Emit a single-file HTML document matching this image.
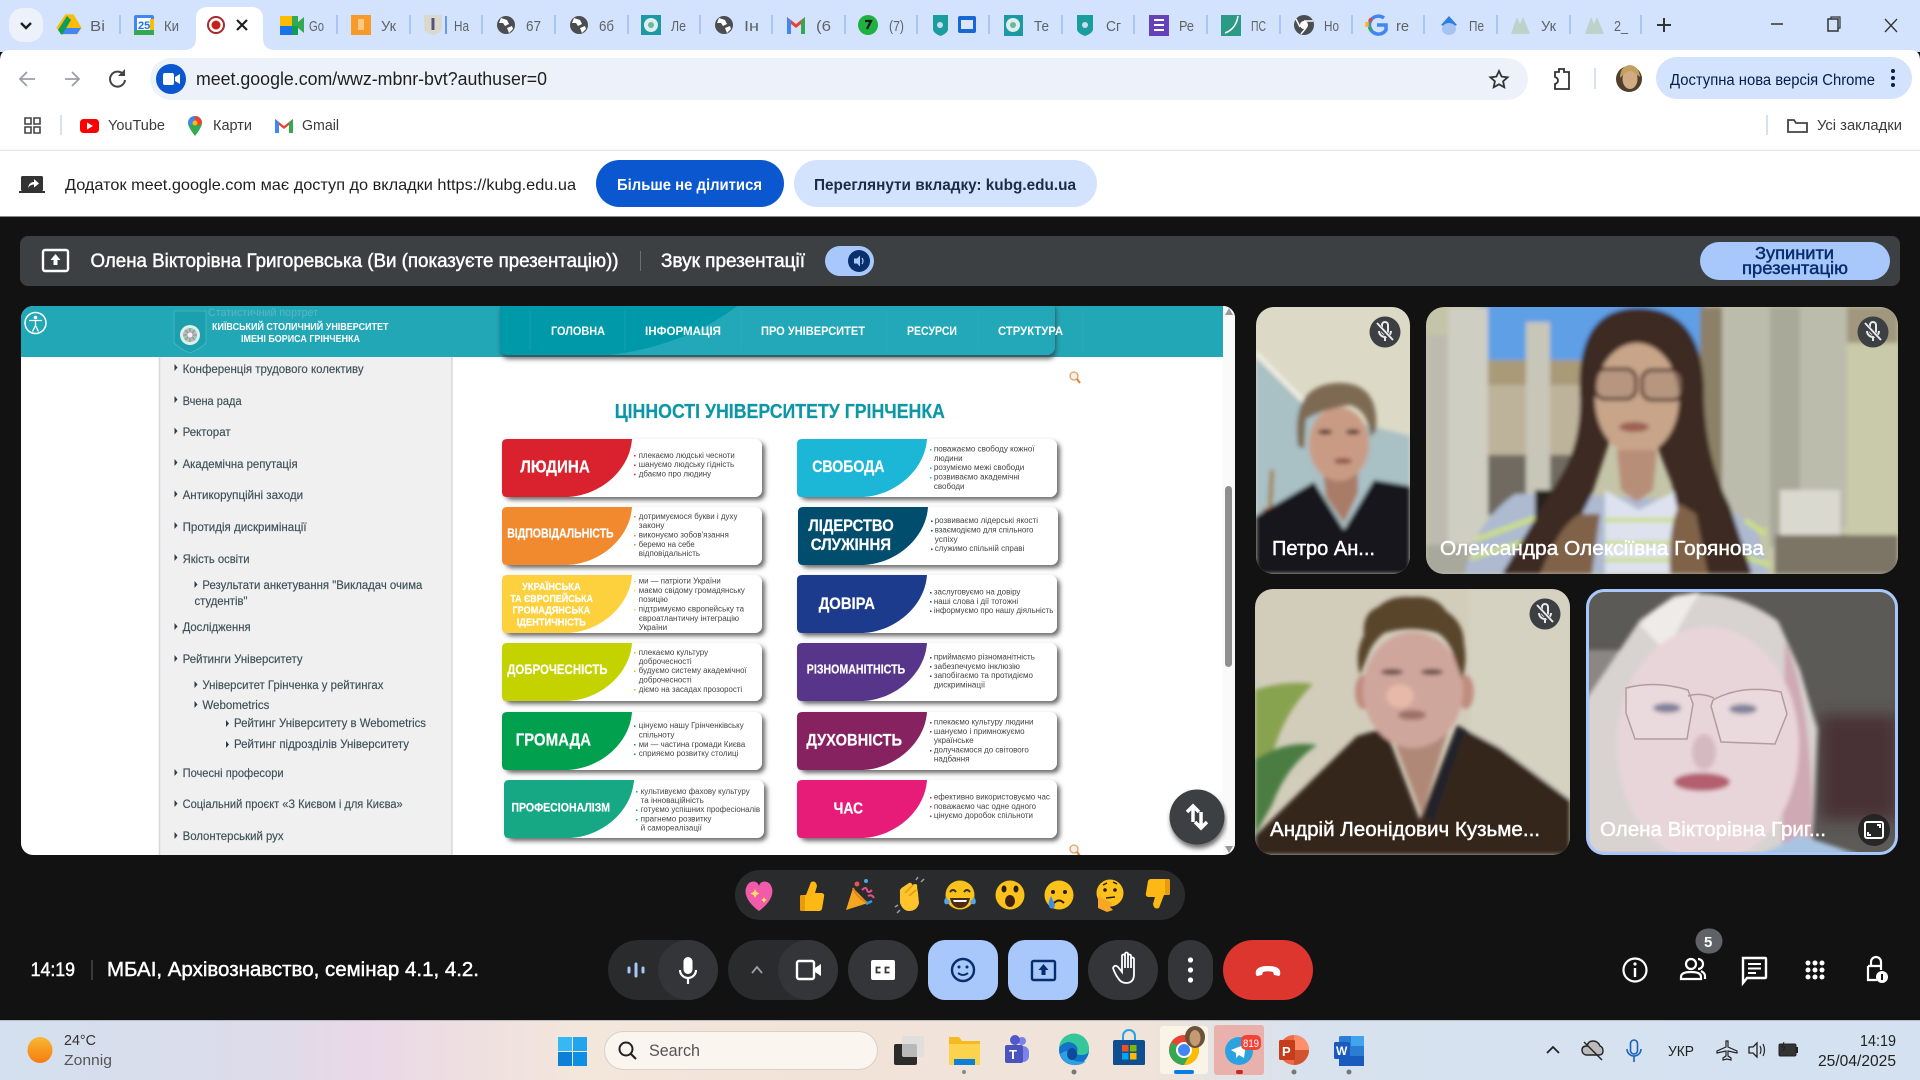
<!DOCTYPE html>
<html lang="uk"><head><meta charset="utf-8"><title>Meet</title>
<style>
html,body{margin:0;padding:0;background:#121212;width:1920px;height:1080px;overflow:hidden}
svg{display:block}
text{font-family:"Liberation Sans","Noto Sans CJK SC",sans-serif}
.m{stroke:currentColor;stroke-width:.45}
.tb text{font-size:15px;fill:#5f6368}
.s text{font-size:11.5px;fill:#3d5058;stroke:#3d5058;stroke-width:.15}
.c text{font-size:8px;fill:#444}
.l text{font-weight:bold;fill:#fff;stroke:#fff;stroke-width:.2}
.n text{font-size:20px;fill:#fff;stroke:#fff;stroke-width:.45}
</style></head><body>
<svg xmlns="http://www.w3.org/2000/svg" width="1920" height="1080" viewBox="0 0 1920 1080">
<defs>
<filter id="b3" x="-20%" y="-20%" width="140%" height="140%"><feGaussianBlur stdDeviation="2"/></filter>
<filter id="b6" x="-30%" y="-30%" width="160%" height="160%"><feGaussianBlur stdDeviation="7"/></filter>
<filter id="b1" x="-5%" y="-5%" width="110%" height="110%"><feGaussianBlur stdDeviation=".35"/></filter>
<filter id="sh" x="-5%" y="-5%" width="112%" height="115%"><feDropShadow dx="3" dy="3" stdDeviation="2.4" flood-color="#444" flood-opacity=".8"/></filter>
<filter id="sh2" x="-5%" y="-20%" width="110%" height="150%"><feDropShadow dx="1" dy="4" stdDeviation="2.5" flood-color="#333" flood-opacity=".7"/></filter>
<linearGradient id="tk" x1="0" x2="1" y1="0" y2="0"><stop offset="0" stop-color="#d3e0ef"/><stop offset=".13" stop-color="#dcdcea"/><stop offset=".19" stop-color="#e9d8e7"/><stop offset=".3" stop-color="#f3e6db"/><stop offset=".42" stop-color="#f2e3d8"/><stop offset=".6" stop-color="#efe3da"/><stop offset=".68" stop-color="#d8e2ef"/><stop offset="1" stop-color="#d3e1f1"/></linearGradient>
<linearGradient id="sun" x1="0" y1="0" x2="0" y2="1"><stop offset="0" stop-color="#f7b733"/><stop offset="1" stop-color="#f57c10"/></linearGradient>
<clipPath id="sl"><rect x="21" y="306" width="1214" height="549" rx="12"/></clipPath>
<clipPath id="t1"><rect x="1256" y="307" width="154" height="267" rx="18"/></clipPath>
<clipPath id="t2"><rect x="1426" y="307" width="472" height="267" rx="18"/></clipPath>
<clipPath id="t3"><rect x="1255" y="589" width="315" height="266" rx="18"/></clipPath>
<clipPath id="t4"><rect x="1586" y="589" width="312" height="266" rx="18"/></clipPath>
<path id="cv" d="M5 0H130C128 30 100 56 66 58H5Q0 58 0 53V5Q0 0 5 0Z"/>
<rect id="cd" width="260" height="58" rx="7" fill="#fff"/>
<g id="glb"><circle r="9" fill="#4a4d51"/><path d="M-5-7 1-5 3-1-1 1-3-2-7-2ZM1 3 6 1 7 4 3 8Z" fill="#fff"/></g>
<g id="mut"><circle r="15.5" fill="#3c4043"/><path d="M-3-7a3 3 0 0 1 6 0v6a3 3 0 0 1-6 0ZM-6-1a6 6 0 0 0 12 0M0 5v4" fill="none" stroke="#e8eaed" stroke-width="2"/><path d="M-8-8 8 9" stroke="#3c4043" stroke-width="4"/><path d="M-8-9 8 8" stroke="#e8eaed" stroke-width="2"/></g>
<path id="thb" d="M-9-1h5l5-13q5-2 6 4l-2 7h7q3 1 2 4l-2 12q-1 2-3 2H-9z"/>
</defs>

<rect width="1920" height="1080" fill="#121212"/>

<!-- tab strip -->
<rect width="1920" height="52" fill="#d3e3fd"/>
<rect x="9" y="8" width="34" height="34" rx="14" fill="#edf2fa"/>
<path d="M21 23l5 5 5-5" fill="none" stroke="#1f1f1f" stroke-width="2.4"/>
<path d="M120 15v19M337 15v19M410 15v19M482 15v19M555 15v19M628 15v19M700 15v19M772 15v19M845 15v19M917 15v19M989 15v19M1062 15v19M1134 15v19M1207 15v19M1280 15v19M1352 15v19M1424 15v19M1497 15v19M1570 15v19M1641 15v19" stroke="#a9c6f5" stroke-width="2"/>
<path d="M184 50q12 0 12-12V19q0-12 12-12h43q12 0 12 12v19q0 12 12 12z" fill="#fff"/>
<!-- tab favicons -->
<path d="M66 16l9 0 9 15-5 7H61l-5-7z" fill="#fbbc04" transform="translate(6 0) scale(.9)"/><path d="M63 28h18l-4 6H60z" fill="#4285f4"/><path d="M67 16l-9 14 4 5 9-15z" fill="#0f9d58"/>
<rect x="134" y="15" width="20" height="20" rx="2" fill="#4285f4"/><rect x="137" y="18" width="14" height="14" fill="#fff"/><rect x="134" y="30" width="20" height="5" fill="#34a853"/><rect x="150" y="19" width="4" height="11" fill="#fbbc04"/><text x="138" y="29" font-size="11" font-weight="bold" fill="#1a73e8">25</text>
<circle cx="216" cy="25" r="8" fill="none" stroke="#a52a2a" stroke-width="2"/><circle cx="216" cy="25" r="4.5" fill="#c5221f"/>
<path d="M237 20l10 10m0-10l-10 10" stroke="#1f1f1f" stroke-width="2.2"/>
<rect x="280" y="16" width="12" height="10" fill="#fbbc04"/><rect x="280" y="26" width="12" height="9" fill="#1a73e8"/><rect x="292" y="16" width="6" height="10" fill="#34a853"/><rect x="292" y="26" width="6" height="9" fill="#0f9d58"/><path d="M298 22l6-5v16l-6-5z" fill="#34a853"/>
<rect x="351" y="15" width="20" height="20" fill="#f79a28"/><rect x="358" y="19" width="6" height="11" fill="#f9c883"/>
<path d="M424 15h18v12q0 6-9 8-9-2-9-8z" fill="#d9d9cf"/><path d="M433 18v12" stroke="#557" stroke-width="3"/><path d="M446 16v18" stroke="#4b7fe0" stroke-width="1.5"/>
<use href="#glb" x="506" y="25"/><use href="#glb" x="579" y="25"/><use href="#glb" x="724" y="25"/>
<rect x="641" y="15" width="20" height="20" fill="#1b9aa5"/><circle cx="651" cy="25" r="7" fill="#dfeee8"/><circle cx="651" cy="25" r="3" fill="#66b7a8"/>
<path d="M787 34V17l9 7 9-7v17h-4V24l-5 4-5-4v10z" fill="#ea4335"/><path d="M787 17v17h4V21z" fill="#4285f4"/><path d="M801 21v13h4V17z" fill="#34a853"/>
<circle cx="868" cy="25" r="10" fill="#1fb141"/><path d="M865 21h6l-4 8" fill="none" stroke="#1a1a1a" stroke-width="2.2"/>
<path d="M933 15h15v14q0 4-7.500 7-7.500-3-7.500-7z" fill="#1a9d9d"/><circle cx="940" cy="25" r="3" fill="#cde"/>
<rect x="958" y="16" width="18" height="17" rx="2" fill="#1967d2"/><rect x="961" y="20" width="12" height="9" fill="#dbe6f6"/>
<rect x="1004" y="15" width="19" height="21" fill="#1b9aa5"/><circle cx="1013" cy="25" r="7" fill="#dfeee8"/><circle cx="1013" cy="25" r="3" fill="#66b7a8"/>
<path d="M1077 15h16v14q0 4-8 7-8-3-8-7z" fill="#1a9d9d"/><circle cx="1085" cy="25" r="3" fill="#cde"/>
<rect x="1149" y="15" width="20" height="21" fill="#6741b8"/><path d="M1154 20h10M1154 25h10M1154 30h10" stroke="#fff" stroke-width="2"/>
<rect x="1221" y="15" width="20" height="21" fill="#2b9b86"/><path d="M1225 33q11-4 13-17" fill="none" stroke="#fff" stroke-width="1.5"/>
<circle cx="1304" cy="25" r="10" fill="#4a4d51"/><circle cx="1304" cy="25" r="4" fill="#fff"/><path d="M1304 21h9M1300 27l-4-8M1306 28l-5 6" stroke="#fff" stroke-width="1.5"/>
<path d="M1384 18a9 9 0 1 0 2 12v-5h-9" fill="none" stroke="#4285f4" stroke-width="3.500"/><path d="M1369 19l3 2" stroke="#ea4335" stroke-width="3.500"/><path d="M1369 30l3-2" stroke="#34a853" stroke-width="3.500"/><path d="M1367 22v5" stroke="#fbbc04" stroke-width="3.500"/>
<path d="M1449 16l8 9-8 3-8-3z" fill="#2f7de1"/><ellipse cx="1449" cy="29" rx="7" ry="6" fill="#a6c4f2"/>
<path d="M1511 34l6-17 3 7 3-7 7 17h-19z" fill="#bcd2ca"/><path d="M1585 34l6-17 3 7 3-7 7 17h-19z" fill="#bcd2ca"/>
<g class="tb">
<text x="90" y="31" textLength="15" lengthAdjust="spacingAndGlyphs">Ві</text>
<text x="164" y="31" textLength="15" lengthAdjust="spacingAndGlyphs">Ки</text>
<text x="309" y="31" textLength="15" lengthAdjust="spacingAndGlyphs">Go</text>
<text x="381" y="31" textLength="15" lengthAdjust="spacingAndGlyphs">Ук</text>
<text x="454" y="31" textLength="15" lengthAdjust="spacingAndGlyphs">На</text>
<text x="526" y="31" textLength="15" lengthAdjust="spacingAndGlyphs">67</text>
<text x="599" y="31" textLength="15" lengthAdjust="spacingAndGlyphs">6б</text>
<text x="671" y="31" textLength="15" lengthAdjust="spacingAndGlyphs">Ле</text>
<text x="744" y="31" textLength="15" lengthAdjust="spacingAndGlyphs">Ін</text>
<text x="816" y="31" textLength="15" lengthAdjust="spacingAndGlyphs">(6</text>
<text x="889" y="31" textLength="15" lengthAdjust="spacingAndGlyphs">(7)</text>
<text x="1034" y="31" textLength="15" lengthAdjust="spacingAndGlyphs">Те</text>
<text x="1106" y="31" textLength="15" lengthAdjust="spacingAndGlyphs">Сг</text>
<text x="1179" y="31" textLength="15" lengthAdjust="spacingAndGlyphs">Ре</text>
<text x="1251" y="31" textLength="15" lengthAdjust="spacingAndGlyphs">ПС</text>
<text x="1324" y="31" textLength="15" lengthAdjust="spacingAndGlyphs">Но</text>
<text x="1396" y="31" textLength="13" lengthAdjust="spacingAndGlyphs">re</text>
<text x="1469" y="31" textLength="15" lengthAdjust="spacingAndGlyphs">Пе</text>
<text x="1541" y="31" textLength="15" lengthAdjust="spacingAndGlyphs">Ук</text>
<text x="1614" y="31" textLength="14" lengthAdjust="spacingAndGlyphs">2_</text>
</g>
<path d="M1664 18v14M1657 25h14" stroke="#333" stroke-width="2"/>
<path d="M1771 24h12" stroke="#333" stroke-width="1.500"/>
<rect x="1828" y="19" width="10" height="12" fill="none" stroke="#333" stroke-width="1.500"/><path d="M1831 19v-2h9v11h-2" fill="none" stroke="#333" stroke-width="1.200"/>
<path d="M1885 19l12 13m0-13l-12 13" stroke="#333" stroke-width="1.300"/>

<!-- toolbar -->
<path d="M0 150V60q0-10 10-10H1910q10 0 10 10v90z" fill="#fff"/>
<rect x="150" y="58" width="1378" height="42" rx="21" fill="#edf2fa"/>
<path d="M35 79H20M27 72l-7 7 7 7" fill="none" stroke="#9aa0a6" stroke-width="1.800"/>
<path d="M65 79h14M72 72l7 7-7 7" fill="none" stroke="#9aa0a6" stroke-width="1.800"/>
<path d="M123 74a7.500 7.500 0 1 0 2 6" fill="none" stroke="#444" stroke-width="2"/><path d="M125 69v7h-7" fill="#444"/>
<circle cx="171" cy="79" r="15" fill="#0b57d0"/><rect x="163" y="73" width="11" height="12" rx="2" fill="#fff"/><path d="M175 77l5-3v10l-5-3z" fill="#fff"/>
<text x="196" y="85" font-size="18" fill="#1f1f1f" textLength="351" lengthAdjust="spacingAndGlyphs">meet.google.com/wwz-mbnr-bvt?authuser=0</text>
<path d="M1499 71l2.600 5.600 6 .7-4.500 4 1.200 6-5.300-3-5.300 3 1.200-6-4.500-4 6-.7z" fill="none" stroke="#333" stroke-width="1.800"/>
<path d="M1555 72h4v-3h5v3h5v17h-14v-5q3-1 3-3.500t-3-3.500z" fill="none" stroke="#333" stroke-width="1.800"/>
<path d="M1595 68v21" stroke="#c7d8f0" stroke-width="1.500"/>
<ellipse cx="1629" cy="79" rx="13" ry="13" fill="#4f3f2c"/><ellipse cx="1630" cy="79" rx="7.500" ry="10" fill="#d0ab84"/><path d="M1620 78q0-12 10-13 9 1 10 12l-3-2q-7-8-14 0z" fill="#c4a060"/>
<rect x="1656" y="57" width="256" height="42" rx="21" fill="#d3e3fd"/>
<text x="1670" y="85" font-size="15.500" fill="#041e49" textLength="205" lengthAdjust="spacingAndGlyphs">Доступна нова версія Chrome</text>
<circle cx="1893" cy="71" r="2" fill="#041e49"/><circle cx="1893" cy="78" r="2" fill="#041e49"/><circle cx="1893" cy="85" r="2" fill="#041e49"/>

<!-- bookmarks -->
<path d="M25 118h6v6h-6zM34 118h6v6h-6zM25 127h6v6h-6zM34 127h6v6h-6z" fill="none" stroke="#444" stroke-width="1.600"/>
<path d="M61 115v20" stroke="#c7d8f0" stroke-width="1.500"/>
<rect x="80" y="119" width="19" height="14" rx="3.500" fill="#f00"/><path d="M87 122.500l6 3.500-6 3.500z" fill="#fff"/>
<text x="108" y="130" font-size="15" fill="#3c3c3c" textLength="57" lengthAdjust="spacingAndGlyphs">YouTube</text>
<path d="M195 136q-7-9-7-13a7 7 0 0 1 14 0q0 4-7 13z" fill="#34a853"/><path d="M188 123a7 7 0 0 1 7-7l3 3-7 7z" fill="#4285f4"/><path d="M195 116a7 7 0 0 1 7 7l-4 3-3-6z" fill="#ea4335"/><circle cx="195" cy="123" r="2.500" fill="#fbbc04"/>
<text x="213" y="130" font-size="15" fill="#3c3c3c" textLength="39" lengthAdjust="spacingAndGlyphs">Карти</text>
<path d="M275 133v-14l9 7 9-7v14h-4v-8l-5 4-5-4v8z" fill="#ea4335"/><path d="M275 119v14h4v-11z" fill="#4285f4"/><path d="M289 122v11h4v-14z" fill="#34a853"/>
<text x="302" y="130" font-size="15" fill="#3c3c3c" textLength="37" lengthAdjust="spacingAndGlyphs">Gmail</text>
<path d="M1767 115v20" stroke="#c7d8f0" stroke-width="1.500"/>
<path d="M1788 120h6l2 3h11v9h-19z" fill="none" stroke="#444" stroke-width="1.800"/>
<text x="1817" y="130" font-size="15" fill="#3c3c3c" textLength="85" lengthAdjust="spacingAndGlyphs">Усі закладки</text>
<path d="M0 150.500H1920" stroke="#e1e3e6" stroke-width="1.500"/>

<!-- infobar -->
<rect y="151" width="1920" height="65.500" fill="#fff"/>
<rect x="21" y="176" width="22" height="15" rx="1.500" fill="#333"/><path d="M19 191h26v2H19z" fill="#333"/><path d="M28 188q1-6 6-6v-3l5 4.500-5 4v-3q-4 0-6 3.500z" fill="#fff"/>
<text x="65" y="190" font-size="16" fill="#1f1f1f" textLength="511" lengthAdjust="spacingAndGlyphs">Додаток meet.google.com має доступ до вкладки https://kubg.edu.ua</text>
<rect x="596" y="160" width="188" height="47" rx="23.500" fill="#0b57d0"/>
<text x="617" y="190" font-size="16" font-weight="bold" fill="#fff" textLength="145" lengthAdjust="spacingAndGlyphs">Більше не ділитися</text>
<rect x="794" y="160" width="303" height="47" rx="23.500" fill="#d3e3fd"/>
<text x="814" y="190" font-size="16" font-weight="bold" fill="#1f2a44" textLength="262" lengthAdjust="spacingAndGlyphs">Переглянути вкладку: kubg.edu.ua</text>

<!-- share bar -->
<rect x="20" y="236" width="1880" height="50" rx="8" fill="#3c4043"/>
<rect x="43" y="250" width="25" height="21" rx="2" fill="none" stroke="#fff" stroke-width="2.400"/><path d="M55.500 254l5 6h-3v5h-4v-5h-3z" fill="#fff"/>
<text x="90.500" y="267" font-size="19" fill="#fff" class="m" color="#fff" textLength="528" lengthAdjust="spacingAndGlyphs">Олена Вікторівна Григоревська (Ви (показуєте презентацію))</text>
<path d="M640.500 251v20" stroke="#6b6e72" stroke-width="1"/>
<text x="661" y="267" font-size="19" fill="#fff" class="m" color="#fff" textLength="144" lengthAdjust="spacingAndGlyphs">Звук презентації</text>
<rect x="825" y="246" width="49" height="30" rx="15" fill="#a8c7fa"/><circle cx="859" cy="261" r="11" fill="#0a2f6d"/>
<path d="M854 258.500h3l3-3v11l-3-3h-3z" fill="#a8c7fa"/><path d="M862 258q2 3 0 6" fill="none" stroke="#a8c7fa" stroke-width="1.200"/>
<rect x="1700" y="242" width="190" height="38" rx="19" fill="#a8c7fa"/>
<text x="1755" y="259" font-size="17.500" fill="#062e6f" class="m" color="#062e6f" textLength="79" lengthAdjust="spacingAndGlyphs">Зупинити</text>
<text x="1742" y="274" font-size="17.500" fill="#062e6f" class="m" color="#062e6f" textLength="106" lengthAdjust="spacingAndGlyphs">презентацію</text>

<!-- slide -->
<g clip-path="url(#sl)">
<rect x="21" y="306" width="1214" height="549" fill="#fff"/>
<g filter="url(#b1)">
<rect x="159" y="306" width="293" height="549" fill="#f0f0f0"/>
<path d="M159.500 306v549M452 306v549" stroke="#d8d8d8" stroke-width="1.500"/>
<g class="s">
<path d="M174.500 364l3 3.500-3 3.500zM174.500 396l3 3.500-3 3.500zM174.500 427.500l3 3.500-3 3.500zM174.500 459l3 3.500-3 3.500zM174.500 490.500l3 3.500-3 3.500zM174.500 522l3 3.500-3 3.500zM174.500 554l3 3.500-3 3.500zM194.500 581l3 3.500-3 3.500zM174.500 623l3 3.500-3 3.500zM174.500 655l3 3.500-3 3.500zM194.500 681l3 3.500-3 3.500zM194.500 701l3 3.500-3 3.500zM226 720l3 3.500-3 3.500zM226 741l3 3.500-3 3.500zM174.500 769l3 3.500-3 3.500zM174.500 800l3 3.500-3 3.500zM174.500 832l3 3.500-3 3.500z" fill="#2d3c44"/>
<text x="182.600" y="373" textLength="181" lengthAdjust="spacingAndGlyphs">Конференція трудового колективу</text>
<text x="182.600" y="405" textLength="59" lengthAdjust="spacingAndGlyphs">Вчена рада</text>
<text x="182.600" y="436" textLength="48" lengthAdjust="spacingAndGlyphs">Ректорат</text>
<text x="182.600" y="468" textLength="115" lengthAdjust="spacingAndGlyphs">Академічна репутація</text>
<text x="182.600" y="499" textLength="120.500" lengthAdjust="spacingAndGlyphs">Антикорупційні заходи</text>
<text x="182.600" y="531" textLength="124" lengthAdjust="spacingAndGlyphs">Протидія дискримінації</text>
<text x="182.600" y="563" textLength="67" lengthAdjust="spacingAndGlyphs">Якість освіти</text>
<text x="202.400" y="589" textLength="220" lengthAdjust="spacingAndGlyphs">Результати анкетування "Викладач очима</text>
<text x="194.500" y="605" textLength="53" lengthAdjust="spacingAndGlyphs">студентів"</text>
<text x="182.600" y="631" textLength="68" lengthAdjust="spacingAndGlyphs">Дослідження</text>
<text x="182.600" y="663" textLength="120" lengthAdjust="spacingAndGlyphs">Рейтинги Університету</text>
<text x="202.400" y="689" textLength="181" lengthAdjust="spacingAndGlyphs">Університет Грінченка у рейтингах</text>
<text x="202.400" y="709" textLength="67" lengthAdjust="spacingAndGlyphs">Webometrics</text>
<text x="234" y="727" textLength="192" lengthAdjust="spacingAndGlyphs">Рейтинг Університету в Webometrics</text>
<text x="234" y="748" textLength="175" lengthAdjust="spacingAndGlyphs">Рейтинг підрозділів Університету</text>
<text x="182.600" y="777" textLength="101" lengthAdjust="spacingAndGlyphs">Почесні професори</text>
<text x="182.600" y="808" textLength="220" lengthAdjust="spacingAndGlyphs">Соціальний проєкт «З Києвом і для Києва»</text>
<text x="182.600" y="840" textLength="101" lengthAdjust="spacingAndGlyphs">Волонтерський рух</text>
</g>
<!-- header -->
<rect x="21" y="306" width="1202" height="51" fill="#23a7b7"/>
<rect x="500" y="300" width="555" height="55" rx="8" fill="#24a8b8" filter="url(#sh2)"/>
<path d="M500 300H745Q690 345 610 355H508Q500 355 500 347z" fill="#0099a9"/>
<path d="M530 310v40M625 310v40M741 310v40M887 310v40M978 310v40M1083 310v40" stroke="#46b5c4" stroke-width=".5" stroke-opacity=".6"/>
<path d="M174 311h32v32q-6 6-16 10-10-4-16-10z" fill="#1ba0ae" stroke="#5cbcc8" stroke-width=".6"/>
<circle cx="190" cy="335" r="10" fill="#dff0ea"/><circle cx="190" cy="335" r="7" fill="#8fd0b8"/><path d="M190 328v14M183 335h14M185 330l10 10M195 330l-10 10" stroke="#d86a9a" stroke-width="1"/><circle cx="190" cy="335" r="2.500" fill="#f5f5f5"/>
<text x="208" y="316" font-size="11" fill="#5bb5c2" textLength="110" lengthAdjust="spacingAndGlyphs">Статистичний портрет</text>
<text x="212" y="330" font-size="10" font-weight="bold" fill="#fff" textLength="176.500" lengthAdjust="spacingAndGlyphs">КИЇВСЬКИЙ СТОЛИЧНИЙ УНІВЕРСИТЕТ</text>
<text x="241" y="342" font-size="10" font-weight="bold" fill="#fff" textLength="119" lengthAdjust="spacingAndGlyphs">ІМЕНІ БОРИСА ГРІНЧЕНКА</text>
<g font-weight="bold" font-size="12" fill="#fff">
<text x="551" y="335" textLength="54" lengthAdjust="spacingAndGlyphs">ГОЛОВНА</text>
<text x="645" y="335" textLength="76" lengthAdjust="spacingAndGlyphs">ІНФОРМАЦІЯ</text>
<text x="761" y="335" textLength="104" lengthAdjust="spacingAndGlyphs">ПРО УНІВЕРСИТЕТ</text>
<text x="907" y="335" textLength="50" lengthAdjust="spacingAndGlyphs">РЕСУРСИ</text>
<text x="998" y="335" textLength="65" lengthAdjust="spacingAndGlyphs">СТРУКТУРА</text>
</g>
<circle cx="35.500" cy="323" r="10.500" fill="none" stroke="#fff" stroke-width="1.500"/><circle cx="35.500" cy="317.500" r="1.800" fill="#fff"/><path d="M29 320.500h13M35.500 320v6M35.500 325.500l-3 6M35.500 325.500l3 6" stroke="#fff" stroke-width="1.300" fill="none"/>
<!-- magnifiers -->
<circle cx="1074" cy="376" r="4" fill="#f7efe4" stroke="#dca66c" stroke-width="1.300"/><path d="M1077 379l3 4" stroke="#d98a3d" stroke-width="2.200"/>
<circle cx="1074" cy="849" r="4" fill="#f7efe4" stroke="#dca66c" stroke-width="1.300"/><path d="M1077 852l3 4" stroke="#d98a3d" stroke-width="2.200"/>
<!-- title -->
<text x="614.700" y="418" font-size="20" font-weight="bold" fill="#0e97a6" stroke="#0e97a6" stroke-width=".2" textLength="330.300" lengthAdjust="spacingAndGlyphs">ЦІННОСТІ УНІВЕРСИТЕТУ ГРІНЧЕНКА</text>
<!-- cards -->
<g filter="url(#sh)">
<use href="#cd" x="502" y="439"/><use href="#cd" x="502" y="507"/><use href="#cd" x="502" y="575"/><use href="#cd" x="502" y="643"/><use href="#cd" x="502" y="712"/><use href="#cd" x="504" y="780"/>
<use href="#cd" x="797" y="439"/><use href="#cd" x="798" y="507"/><use href="#cd" x="797" y="575"/><use href="#cd" x="797" y="643"/><use href="#cd" x="797" y="712"/><use href="#cd" x="797" y="780"/>
</g>
<use href="#cv" x="502" y="439" fill="#d9232e"/><use href="#cv" x="502" y="507" fill="#f18a2f"/><use href="#cv" x="502" y="575" fill="#fdd03e"/><use href="#cv" x="502" y="643" fill="#c4d200"/><use href="#cv" x="502" y="712" fill="#03a04f"/><use href="#cv" x="504" y="780" fill="#12a785"/>
<use href="#cv" x="797" y="439" fill="#1fb7d7"/><use href="#cv" x="798" y="507" fill="#034d6e"/><use href="#cv" x="797" y="575" fill="#1f3a8c"/><use href="#cv" x="797" y="643" fill="#57348a"/><use href="#cv" x="797" y="712" fill="#85205f"/><use href="#cv" x="797" y="780" fill="#e61d78"/>
<g class="l">
<text x="520.200" y="472.300" font-size="17.500" textLength="69.700" lengthAdjust="spacingAndGlyphs">ЛЮДИНА</text>
<text x="507.200" y="537.700" font-size="13" textLength="106.400" lengthAdjust="spacingAndGlyphs">ВІДПОВІДАЛЬНІСТЬ</text>
<text x="522.100" y="590" font-size="10.500" textLength="58.600" lengthAdjust="spacingAndGlyphs">УКРАЇНСЬКА</text>
<text x="510.200" y="602" font-size="10.500" textLength="82.700" lengthAdjust="spacingAndGlyphs">ТА ЄВРОПЕЙСЬКА</text>
<text x="512.500" y="613.700" font-size="10.500" textLength="77.700" lengthAdjust="spacingAndGlyphs">ГРОМАДЯНСЬКА</text>
<text x="516.700" y="625.700" font-size="10.500" textLength="69.300" lengthAdjust="spacingAndGlyphs">ІДЕНТИЧНІСТЬ</text>
<text x="507.200" y="674" font-size="14" textLength="100.300" lengthAdjust="spacingAndGlyphs">ДОБРОЧЕСНІСТЬ</text>
<text x="515.600" y="745.300" font-size="17.500" textLength="75.400" lengthAdjust="spacingAndGlyphs">ГРОМАДА</text>
<text x="511.400" y="811.700" font-size="12" textLength="98.700" lengthAdjust="spacingAndGlyphs">ПРОФЕСІОНАЛІЗМ</text>
<text x="812.200" y="472" font-size="17" textLength="72.300" lengthAdjust="spacingAndGlyphs">СВОБОДА</text>
<text x="808.400" y="531" font-size="16.500" textLength="85.300" lengthAdjust="spacingAndGlyphs">ЛІДЕРСТВО</text>
<text x="810.700" y="550" font-size="16.500" textLength="80.400" lengthAdjust="spacingAndGlyphs">СЛУЖІННЯ</text>
<text x="818.700" y="609" font-size="17" textLength="56.300" lengthAdjust="spacingAndGlyphs">ДОВІРА</text>
<text x="806.800" y="673.700" font-size="12.500" textLength="98.400" lengthAdjust="spacingAndGlyphs">РІЗНОМАНІТНІСТЬ</text>
<text x="806.400" y="745.300" font-size="17" textLength="95.700" lengthAdjust="spacingAndGlyphs">ДУХОВНІСТЬ</text>
<text x="833.600" y="813.300" font-size="16" textLength="29.500" lengthAdjust="spacingAndGlyphs">ЧАС</text>
</g>
<g class="c">
<text x="638.800" y="457.800" textLength="96" lengthAdjust="spacingAndGlyphs">плекаємо людські чесноти</text>
<text x="638.800" y="467.200" textLength="95.300" lengthAdjust="spacingAndGlyphs">шануємо людську гідність</text>
<text x="638.800" y="476.500" textLength="72.300" lengthAdjust="spacingAndGlyphs">дбаємо про людину</text>
<text x="638.800" y="518.800" textLength="98.700" lengthAdjust="spacingAndGlyphs">дотримуємося букви і духу</text>
<text x="638.800" y="528.200" textLength="25.600" lengthAdjust="spacingAndGlyphs">закону</text>
<text x="638.800" y="537.500" textLength="90" lengthAdjust="spacingAndGlyphs">виконуємо зобов'язання</text>
<text x="638.800" y="546.800" textLength="55.900" lengthAdjust="spacingAndGlyphs">беремо на себе</text>
<text x="638.800" y="556.200" textLength="61.200" lengthAdjust="spacingAndGlyphs">відповідальність</text>
<text x="638.800" y="583.500" textLength="81.900" lengthAdjust="spacingAndGlyphs">ми — патріоти України</text>
<text x="638.800" y="592.800" textLength="106" lengthAdjust="spacingAndGlyphs">маємо свідому громадянську</text>
<text x="638.800" y="602.200" textLength="29" lengthAdjust="spacingAndGlyphs">позицію</text>
<text x="638.800" y="611.500" textLength="105.200" lengthAdjust="spacingAndGlyphs">підтримуємо європейську та</text>
<text x="638.800" y="620.800" textLength="100.300" lengthAdjust="spacingAndGlyphs">євроатлантичну інтеграцію</text>
<text x="638.800" y="629.800" textLength="28.300" lengthAdjust="spacingAndGlyphs">України</text>
<text x="638.800" y="654.800" textLength="69.300" lengthAdjust="spacingAndGlyphs">плекаємо культуру</text>
<text x="638.800" y="663.800" textLength="52.800" lengthAdjust="spacingAndGlyphs">доброчесності</text>
<text x="638.800" y="673.200" textLength="107.900" lengthAdjust="spacingAndGlyphs">будуємо систему академічної</text>
<text x="638.800" y="682.500" textLength="52.800" lengthAdjust="spacingAndGlyphs">доброчесності</text>
<text x="638.800" y="691.800" textLength="103.300" lengthAdjust="spacingAndGlyphs">діємо на засадах прозорості</text>
<text x="638.800" y="728.200" textLength="104.900" lengthAdjust="spacingAndGlyphs">цінуємо нашу Грінченківську</text>
<text x="638.800" y="737.500" textLength="35.600" lengthAdjust="spacingAndGlyphs">спільноту</text>
<text x="638.800" y="746.800" textLength="106.400" lengthAdjust="spacingAndGlyphs">ми — частина громади Києва</text>
<text x="638.800" y="756.200" textLength="99.500" lengthAdjust="spacingAndGlyphs">сприяємо розвитку столиці</text>
<text x="640.700" y="793.800" textLength="109" lengthAdjust="spacingAndGlyphs">культивуємо фахову культуру</text>
<text x="640.700" y="802.800" textLength="63.100" lengthAdjust="spacingAndGlyphs">та інноваційність</text>
<text x="640.700" y="812.200" textLength="119.400" lengthAdjust="spacingAndGlyphs">готуємо успішних професіоналів</text>
<text x="640.700" y="821.500" textLength="70.800" lengthAdjust="spacingAndGlyphs">прагнемо розвитку</text>
<text x="640.700" y="830.500" textLength="61.200" lengthAdjust="spacingAndGlyphs">й самореалізації</text>
<text x="933.900" y="451.500" textLength="100.700" lengthAdjust="spacingAndGlyphs">поважаємо свободу кожної</text>
<text x="933.900" y="460.800" textLength="28.700" lengthAdjust="spacingAndGlyphs">людини</text>
<text x="933.900" y="470.200" textLength="90.300" lengthAdjust="spacingAndGlyphs">розуміємо межі свободи</text>
<text x="933.900" y="479.500" textLength="85.700" lengthAdjust="spacingAndGlyphs">розвиваємо академічні</text>
<text x="933.900" y="488.800" textLength="30.600" lengthAdjust="spacingAndGlyphs">свободи</text>
<text x="934.700" y="523.200" textLength="103.300" lengthAdjust="spacingAndGlyphs">розвиваємо лідерські якості</text>
<text x="934.700" y="532.500" textLength="98.700" lengthAdjust="spacingAndGlyphs">взаємодіємо для спільного</text>
<text x="934.700" y="541.800" textLength="23" lengthAdjust="spacingAndGlyphs">успіху</text>
<text x="934.700" y="551.200" textLength="89.600" lengthAdjust="spacingAndGlyphs">служимо спільній справі</text>
<text x="933.900" y="594.500" textLength="86.500" lengthAdjust="spacingAndGlyphs">заслуговуємо на довіру</text>
<text x="933.900" y="603.800" textLength="84.200" lengthAdjust="spacingAndGlyphs">наші слова і дії тотожні</text>
<text x="933.900" y="613.200" textLength="119.400" lengthAdjust="spacingAndGlyphs">інформуємо про нашу діяльність</text>
<text x="933.900" y="659.500" textLength="101" lengthAdjust="spacingAndGlyphs">приймаємо різноманітність</text>
<text x="933.900" y="668.800" textLength="86.100" lengthAdjust="spacingAndGlyphs">забезпечуємо інклюзію</text>
<text x="933.900" y="678.200" textLength="99.100" lengthAdjust="spacingAndGlyphs">запобігаємо та протидіємо</text>
<text x="933.900" y="687.500" textLength="51.300" lengthAdjust="spacingAndGlyphs">дискримінації</text>
<text x="933.900" y="724.500" textLength="99.500" lengthAdjust="spacingAndGlyphs">плекаємо культуру людини</text>
<text x="933.900" y="733.800" textLength="90.700" lengthAdjust="spacingAndGlyphs">шануємо і примножуємо</text>
<text x="933.900" y="743.200" textLength="39.800" lengthAdjust="spacingAndGlyphs">українське</text>
<text x="933.900" y="752.500" textLength="94.900" lengthAdjust="spacingAndGlyphs">долучаємося до світового</text>
<text x="933.900" y="761.500" textLength="35.600" lengthAdjust="spacingAndGlyphs">надбання</text>
<text x="933.900" y="799.500" textLength="116" lengthAdjust="spacingAndGlyphs">ефективно використовуємо час</text>
<text x="933.900" y="808.800" textLength="102.200" lengthAdjust="spacingAndGlyphs">поважаємо час одне одного</text>
<text x="933.900" y="818.200" textLength="99.100" lengthAdjust="spacingAndGlyphs">цінуємо доробок спільноти</text>
</g>
<!-- bullets -->
<path d="M634 455h1.500v1.500H634zM634 464.500h1.500v1.500H634zM634 473.800h1.500v1.500H634z" fill="#d9232e"/>
<path d="M634 516h1.500v1.500H634zM634 535h1.500v1.500H634zM634 544h1.500v1.500H634z" fill="#f18a2f"/>
<path d="M634 581h1.500v1.500H634zM634 590h1.500v1.500H634zM634 609h1.500v1.500H634z" fill="#fdd03e"/>
<path d="M634 652h1.500v1.500H634zM634 670.500h1.500v1.500H634zM634 689h1.500v1.500H634z" fill="#c4d200"/>
<path d="M634 725.500h1.500v1.500H634zM634 744h1.500v1.500H634zM634 753.500h1.500v1.500H634z" fill="#03a04f"/>
<path d="M636 791h1.500v1.500H636zM636 809.500h1.500v1.500H636zM636 819h1.500v1.500H636z" fill="#12a785"/>
<path d="M930 449h1.500v1.500H930zM930 467.500h1.500v1.500H930zM930 477h1.500v1.500H930z" fill="#1fb7d7"/>
<path d="M931 520.500h1.500v1.500H931zM931 530h1.500v1.500H931zM931 548.500h1.500v1.500H931z" fill="#034d6e"/>
<path d="M930 592h1.500v1.500H930zM930 601h1.500v1.500H930zM930 610.500h1.500v1.500H930z" fill="#1f3a8c"/>
<path d="M930 657h1.500v1.500H930zM930 666h1.500v1.500H930zM930 675.500h1.500v1.500H930z" fill="#57348a"/>
<path d="M930 722h1.500v1.500H930zM930 731h1.500v1.500H930zM930 750h1.500v1.500H930z" fill="#85205f"/>
<path d="M930 797h1.500v1.500H930zM930 806h1.500v1.500H930zM930 815.500h1.500v1.500H930z" fill="#e61d78"/>
</g>
<!-- scrollbar -->
<rect x="1223" y="306" width="12" height="549" fill="#fafafa"/>
<path d="M1229 308l4 7h-8z" fill="#999"/><path d="M1229 853l4-7h-8z" fill="#999"/>
<rect x="1225" y="486" width="7" height="181" rx="3.500" fill="#8f8f8f"/>
<circle cx="1197" cy="817" r="27.500" fill="#3c4043" filter="url(#sh2)"/>
<path d="M1193 822v-15M1187 812l6-6 6 6M1201 812v16M1195 822l6 6 6-6" fill="none" stroke="#fff" stroke-width="3.500"/>
</g>

<!-- tile 1 -->
<g clip-path="url(#t1)">
<rect x="1256" y="307" width="154" height="267" fill="#dcdac6"/>
<g filter="url(#b3)">
<path d="M1256 358L1309 410 1410 436V574H1256Z" fill="#a9c0c4"/>
<path d="M1256 353L1309 407" stroke="#f0efe6" stroke-width="4"/>
<path d="M1272 470l-3 60" stroke="#a67c3c" stroke-width="4"/><ellipse cx="1267" cy="530" rx="9" ry="22" fill="#b23c36"/>
<path d="M1322 465h36l0 28-14 30-18-26z" fill="#a97c68"/>
<path d="M1256 516L1314 482 1344 530 1374 480 1410 486V574H1256Z" fill="#15161b"/>
<ellipse cx="1339" cy="444" rx="30" ry="37" fill="#c99b84"/>
<path d="M1298 446q-8-60 38-63 44-2 40 48l-6 6q-1-26-20-32-26 4-44 14l-2 30z" fill="#7e6a52"/>
<ellipse cx="1325" cy="432" rx="7" ry="2.500" fill="#4e352b"/><ellipse cx="1353" cy="432" rx="7" ry="2.500" fill="#4e352b"/>
<ellipse cx="1343" cy="461" rx="9" ry="3" fill="#8f544e"/>
</g>
</g>
<use href="#mut" x="1385" y="332"/>
<g class="n"><text x="1272" y="555" textLength="103" lengthAdjust="spacingAndGlyphs">Петро Ан...</text></g>

<!-- tile 2 -->
<g clip-path="url(#t2)">
<rect x="1426" y="307" width="472" height="267" fill="#c4c4a8"/>
<g filter="url(#b3)">
<rect x="1480" y="300" width="225" height="62" fill="#5f9fe6"/>
<rect x="1480" y="360" width="110" height="25" fill="#a99a78"/>
<rect x="1480" y="385" width="110" height="70" fill="#bdb39b"/>
<rect x="1480" y="455" width="100" height="60" fill="#6f6b60"/>
<rect x="1426" y="335" width="22" height="240" fill="#bdbbaf"/>
<rect x="1448" y="307" width="40" height="240" fill="#cfcec2"/>
<rect x="1526" y="322" width="24" height="210" fill="#c7c6b8"/>
<rect x="1700" y="307" width="22" height="230" fill="#8c8068"/>
<rect x="1722" y="307" width="125" height="220" fill="#bcbcad"/>
<rect x="1770" y="307" width="30" height="240" fill="#a9a99a"/>
<rect x="1780" y="490" width="60" height="45" fill="#dad9d0"/>
<rect x="1847" y="340" width="51" height="200" fill="#c9caa9"/>
<rect x="1847" y="307" width="51" height="36" fill="#a0977e"/>
<rect x="1775" y="535" width="123" height="39" fill="#7c7466"/>
<rect x="1426" y="545" width="50" height="29" fill="#a8a89c"/>
<path d="M1465 574q8-50 50-80l60 0 130 8 50 20 14 52z" fill="#aebad0"/>
<path d="M1475 540l60-22M1470 558l60-18M1745 520l20 14M1740 555l30 10M1605 522l90 0M1605 545h90" stroke="#cde07a" stroke-width="5"/>
<path d="M1535 490l20 0 0 48-20 10z" fill="#28231f"/>
<path d="M1605 490l34 20 38-20v84h-72z" fill="#dde2ee"/>
<path d="M1605 520h72M1605 543h72M1605 560h72" stroke="#cddd7a" stroke-width="4"/>
<path d="M1580 400q-6-92 58-92 68 0 66 92 2 60 26 106l22 68h-60l-20-90-20-50h-40l-20 60-40 80h-50l60-100q18-30 18-74z" fill="#3d2c22"/>
<path d="M1540 574q20-50 40-60l20 0-8 60zM1670 574q-2-50 10-70l16 10 12 60z" fill="#80624a"/>
<ellipse cx="1637" cy="399" rx="42" ry="56" fill="#c8a589"/>
<path d="M1617 450h40l-4 40-16 12-16-12z" fill="#b78f78"/>
<rect x="1595" y="369" width="41" height="30" rx="10" fill="#a98a78" fill-opacity=".55" stroke="#3e2620" stroke-width="3"/>
<rect x="1642" y="370" width="41" height="30" rx="10" fill="#a98a78" fill-opacity=".55" stroke="#3e2620" stroke-width="3"/>
<ellipse cx="1634" cy="427" rx="15" ry="5" fill="#9c6055"/>
</g>
</g>
<use href="#mut" x="1873" y="332"/>
<g class="n"><text x="1440" y="555" textLength="324" lengthAdjust="spacingAndGlyphs">Олександра Олексіївна Горянова</text></g>

<!-- tile 3 -->
<g clip-path="url(#t3)">
<rect x="1255" y="589" width="315" height="266" fill="#d2cdbb"/>
<g filter="url(#b3)">
<rect x="1470" y="589" width="100" height="266" fill="#d6d2c2"/>
<path d="M1255 690q30-10 58-6-30 30-40 70l-18 40z" fill="#88a34f"/>
<path d="M1255 760q30-20 62-15-30 20-45 60l-17 30z" fill="#4c7d43"/>
<path d="M1255 836L1357 736 1385 728 1420 820 1457 725 1500 748 1570 800V855H1255Z" fill="#35281b"/>
<path d="M1388 725h62l-28 90z" fill="#b08878"/>
<path d="M1425 815l32-90 8 5-32 92z" fill="#22222a"/>
<ellipse cx="1363" cy="692" rx="8" ry="17" fill="#c08c7d"/><ellipse cx="1466" cy="692" rx="8" ry="17" fill="#c08c7d"/>
<ellipse cx="1413" cy="690" rx="50" ry="58" fill="#cfa69c"/>
<path d="M1360 675q-6-22 4-40-2-22 14-28 14-12 34-10 24-2 34 14 18 12 18 32 4 18-2 36l-8-22q-4-16-16-24-26-8-54 0-12 10-16 22z" fill="#58452c"/>
<ellipse cx="1392" cy="672" rx="11" ry="3" fill="#6a4f47"/><ellipse cx="1432" cy="672" rx="11" ry="3" fill="#6a4f47"/>
<ellipse cx="1412" cy="715" rx="14" ry="5" fill="#9e6f68"/>
<ellipse cx="1400" cy="696" rx="14" ry="12" fill="#e6b9a8"/>
</g>
</g>
<use href="#mut" x="1545" y="614"/>
<g class="n"><text x="1270" y="836" textLength="270" lengthAdjust="spacingAndGlyphs">Андрій Леонідович Кузьме...</text></g>

<!-- tile 4 -->
<g clip-path="url(#t4)">
<rect x="1586" y="589" width="312" height="266" fill="#5c5a57"/>
<g filter="url(#b3)">
<rect x="1586" y="650" width="40" height="205" fill="#8a8785"/>
<rect x="1820" y="715" width="78" height="105" fill="#4a3236" filter="url(#b6)"/>
<path d="M1586 855V700L1610 665 1640 620 1674 596Q1730 586 1778 621L1800 670 1817 729 1812 855Z" fill="#d8d3d0"/>
<path d="M1785 640q30 70 27 215h-30z" fill="#cfa9b4"/>
<path d="M1640 625q25-30 60-33-16 25-34 60z" fill="#efebe8"/>
<ellipse cx="1708" cy="745" rx="91" ry="118" fill="#e8d5da"/>
<ellipse cx="1667" cy="708" rx="14" ry="5" fill="#747590"/><ellipse cx="1743" cy="709" rx="14" ry="5" fill="#747590"/>
<ellipse cx="1704" cy="752" rx="12" ry="18" fill="#d4b9c0"/>
<ellipse cx="1702" cy="782" rx="28" ry="9" fill="#b45e70"/>
<path d="M1760 855l40-20 60 20z" fill="#a9c4e3"/>
</g>
<path d="M1626 688q30-8 62 2l5 14-6 35-52 0-9-26z" fill="#fff" fill-opacity=".1" stroke="#b39c9c" stroke-width="1.500"/>
<path d="M1713 700q30-16 68-8l6 22-12 30-54-2-10-36z" fill="#fff" fill-opacity=".1" stroke="#b39c9c" stroke-width="1.500"/>
<path d="M1688 696q12-4 26 2" fill="none" stroke="#b39c9c" stroke-width="1.500"/>
</g>
<rect x="1587.500" y="590.500" width="309" height="263" rx="17" fill="none" stroke="#a8c7fa" stroke-width="3"/>
<circle cx="1874" cy="830" r="16" fill="#1f1f1f" fill-opacity=".85"/>
<rect x="1865" y="822" width="18" height="16" rx="2" fill="none" stroke="#fff" stroke-width="2"/><path d="M1877 825h3v3M1871 835h-3v-3" fill="none" stroke="#fff" stroke-width="2"/>
<g class="n"><text x="1600" y="836" textLength="226" lengthAdjust="spacingAndGlyphs">Олена Вікторівна Григ...</text></g>

<!-- reactions -->
<rect x="735" y="870" width="450" height="50" rx="25" fill="#2a2b2d"/>
<path d="M759 911C744 900 743 889 749 883 754 880 758 882 759 886 760 882 764 880 769 883 775 889 774 900 759 911Z" fill="#f25ba9"/><path d="M755 889l1.500 3 3 1.500-3 1.500-1.500 3-1.500-3-3-1.500 3-1.500zM764 897l1 2 2 1-2 1-1 2-1-2-2-1 2-1z" fill="#ffe066"/>
<use href="#thb" x="810" y="896" fill="#fdb813"/><rect x="800" y="895" width="5" height="16" rx="1.500" fill="#e99b0d"/>
<path d="M846 910l7-22 15 15z" fill="#f6a51f"/><path d="M853 888q4 10 15 15" stroke="#e0861a" stroke-width="2" fill="none"/><circle cx="857" cy="884" r="2.500" fill="#e8554e"/><circle cx="866" cy="881" r="2" fill="#4aa3e0"/><path d="M862 890q4-4 5 0t5 0M868 896q4-2 6 2" stroke="#e84e8a" stroke-width="2" fill="none"/><path d="M866 904l6-3" stroke="#2a9be0" stroke-width="2.500"/>
<path d="M900 893q-1-4 3-6l6-4q3-1 3 2l3-1q3 0 2 3l1 6 1 10q-2 8-10 8-6 0-9-8z" fill="#fdc42d"/><path d="M905 893l8-8M909 896l7-6" stroke="#e09e13" stroke-width="1.500"/><path d="M916 880l2-3M921 882l3-3M898 905l-3 2M900 910l-3 3" stroke="#9aa0a6" stroke-width="1.500"/>
<circle cx="960" cy="895" r="14.500" fill="#fcc21b"/><path d="M950 892q3-4 6 0M964 892q3-4 6 0" stroke="#333" stroke-width="2" fill="none"/><path d="M950 898h20q-2 10-10 10t-10-10z" fill="#4b2a1a"/><path d="M953 900h14l-1 2h-12z" fill="#fff"/><path d="M946 897q-3 4-1 7 3 1 5-2z" fill="#4ea6e8"/><path d="M974 897q3 4 1 7-3 1-5-2z" fill="#4ea6e8"/>
<circle cx="1010" cy="895" r="14.500" fill="#fcc21b"/><ellipse cx="1004" cy="889" rx="2.500" ry="3.500" fill="#2b1c10"/><ellipse cx="1016" cy="889" rx="2.500" ry="3.500" fill="#2b1c10"/><ellipse cx="1010" cy="901" rx="5" ry="6" fill="#3f2012"/>
<circle cx="1059" cy="895" r="14.500" fill="#fcc21b"/><circle cx="1053" cy="892" r="2" fill="#2b1c10"/><circle cx="1065" cy="892" r="2" fill="#2b1c10"/><path d="M1054 903q5-5 10 0" stroke="#2b1c10" stroke-width="2" fill="none"/><path d="M1051 896q-4 8-1 12 4 2 5-3z" fill="#3f8fe0"/>
<circle cx="1110" cy="893" r="13.500" fill="#fcc21b"/><circle cx="1105" cy="890" r="1.800" fill="#2b1c10"/><circle cx="1115" cy="890" r="1.800" fill="#2b1c10"/><path d="M1103 885l4-2M1113 882l4 2M1106 898l9-1" stroke="#2b1c10" stroke-width="1.500" fill="none"/><path d="M1098 896l14 7-2 4 3 3-6 2-9-4z" fill="#f9a825"/>
<use href="#thb" transform="translate(1160 894) rotate(180)" fill="#fdb813"/><rect x="1165" y="879" width="5" height="16" rx="1.500" fill="#e99b0d"/>

<!-- bottom left -->
<text x="30.600" y="976" font-size="19" fill="#fff" class="m" color="#fff" textLength="44.400" lengthAdjust="spacingAndGlyphs">14:19</text>
<path d="M92 960v20" stroke="#5f6368"/>
<text x="107" y="976" font-size="20" fill="#fff" class="m" color="#fff" textLength="372" lengthAdjust="spacingAndGlyphs">МБАІ, Архівознавство, семінар 4.1, 4.2.</text>

<!-- controls -->
<rect x="608" y="940" width="110" height="60" rx="30" fill="#2a2b2d"/><rect x="658" y="940" width="60" height="60" rx="30" fill="#343538"/>
<path d="M629 968v4M636 964v12M643 968v4" stroke="#a8c7fa" stroke-width="3" stroke-linecap="round"/>
<rect x="683.500" y="957" width="9" height="17" rx="4.500" fill="#fff"/><path d="M680 970a8 8 0 0 0 16 0M688 978v6" fill="none" stroke="#fff" stroke-width="2.200"/>
<rect x="728" y="940" width="110" height="60" rx="30" fill="#2a2b2d"/><rect x="778" y="940" width="60" height="60" rx="30" fill="#343538"/>
<path d="M752 973l5-6 5 6" fill="none" stroke="#9aa0a6" stroke-width="1.800"/>
<rect x="797" y="961" width="17" height="18" rx="2" fill="none" stroke="#fff" stroke-width="2.400"/><path d="M815 968l6-4v12l-6-4z" fill="#fff"/>
<rect x="848" y="940" width="70" height="60" rx="30" fill="#343538"/>
<rect x="871" y="960" width="24" height="20" rx="2" fill="#fff"/><path d="M880.500 967.500h-4v5h4M889.500 967.500h-4v5h4" fill="none" stroke="#343538" stroke-width="1.800"/>
<rect x="928" y="940" width="70" height="60" rx="17" fill="#a8c7fa"/>
<circle cx="963" cy="970" r="11" fill="none" stroke="#062e6f" stroke-width="2.400"/><circle cx="959" cy="967" r="1.500" fill="#062e6f"/><circle cx="967" cy="967" r="1.500" fill="#062e6f"/><path d="M958 973q5 4 10 0" fill="none" stroke="#062e6f" stroke-width="1.800"/>
<rect x="1008" y="940" width="70" height="60" rx="17" fill="#a8c7fa"/>
<rect x="1032" y="961" width="23" height="19" rx="1.500" fill="none" stroke="#062e6f" stroke-width="2.400"/><path d="M1043.500 964l5 6h-3v5h-4v-5h-3z" fill="#062e6f"/>
<rect x="1088" y="940" width="70" height="60" rx="30" fill="#343538"/>
<path d="M1113 968q2 6 5 10 3 5 8 5 8 0 8-9v-15a1.500 1.500 0 0 0-3 0v9-12a1.500 1.500 0 0 0-3 0v12-14a1.500 1.500 0 0 0-3 0v14-12a1.500 1.500 0 0 0-3 0v16l-4-5q-3-3-5 1z" fill="none" stroke="#fff" stroke-width="1.800"/>
<rect x="1168" y="940" width="45" height="60" rx="22.500" fill="#343538"/>
<circle cx="1190.500" cy="960" r="2.600" fill="#fff"/><circle cx="1190.500" cy="970" r="2.600" fill="#fff"/><circle cx="1190.500" cy="980" r="2.600" fill="#fff"/>
<rect x="1223" y="940" width="90" height="60" rx="30" fill="#dc362e"/>
<path d="M1256 975q-2-9 12-9t12 9l-1 1-5-1-1-3q-6-1.500-10 0l-1 3-5 1z" fill="#fff"/>

<!-- right icons -->
<circle cx="1635" cy="970" r="11.500" fill="none" stroke="#fff" stroke-width="2.200"/><circle cx="1635" cy="964" r="1.600" fill="#fff"/><path d="M1635 968v9" stroke="#fff" stroke-width="2.400"/>
<rect x="1695.500" y="928.500" width="27" height="25" rx="12.500" fill="#5f6368"/><text x="1704" y="947" font-size="15" font-weight="bold" fill="#fff">5</text>
<circle cx="1691" cy="964" r="5" fill="none" stroke="#fff" stroke-width="2.200"/><path d="M1681 979v-2q0-5 10-5t10 5v2z" fill="none" stroke="#fff" stroke-width="2.200"/><path d="M1698 959a5 5 0 0 1 0 10M1705 979v-3q0-3-4-5" fill="none" stroke="#fff" stroke-width="2.200"/>
<path d="M1743 958h22q1 0 1 1v18q0 1-1 1h-18l-4 5z" fill="none" stroke="#fff" stroke-width="2.400"/><path d="M1748 964h13M1748 968.500h13M1748 973h8" stroke="#fff" stroke-width="2"/>
<g fill="#fff"><circle cx="1808" cy="963" r="2.500"/><circle cx="1815" cy="963" r="2.500"/><circle cx="1822" cy="963" r="2.500"/><circle cx="1808" cy="970" r="2.500"/><circle cx="1815" cy="970" r="2.500"/><circle cx="1822" cy="970" r="2.500"/><circle cx="1808" cy="977" r="2.500"/><circle cx="1815" cy="977" r="2.500"/><circle cx="1822" cy="977" r="2.500"/></g>
<path d="M1868 966h13v4M1868 966v14h9M1871 966v-4a5 5 0 0 1 10 0v4" fill="none" stroke="#fff" stroke-width="2.200"/><circle cx="1882" cy="977" r="6" fill="#fff"/><path d="M1882 974v6" stroke="#121212" stroke-width="2"/>

<!-- taskbar -->
<rect y="1020" width="1920" height="60" fill="url(#tk)"/><path d="M0 1020.500H1920" stroke="#b8bcc4"/>
<ellipse cx="40" cy="1050" rx="12.500" ry="13" fill="url(#sun)"/>
<text x="64" y="1045" font-size="15" fill="#333" textLength="32" lengthAdjust="spacingAndGlyphs">24°C</text>
<text x="64" y="1065" font-size="15" fill="#555" textLength="48" lengthAdjust="spacingAndGlyphs">Zonnig</text>
<path d="M558 1037h14v14h-14z" fill="#35b8f3"/><path d="M573 1037h14v14h-14z" fill="#22a5ee"/><path d="M558 1052h14v14h-14z" fill="#0c7fd9"/><path d="M573 1052h14v14h-14z" fill="#0e8fe3"/>
<rect x="604.500" y="1031.500" width="273" height="38" rx="19" fill="#fbf5ef" stroke="#d9cfcb"/>
<circle cx="626" cy="1049" r="6.500" fill="none" stroke="#222" stroke-width="2"/><path d="M631 1054l5 5" stroke="#222" stroke-width="2.200"/>
<text x="649" y="1056" font-size="17" fill="#555" textLength="51" lengthAdjust="spacingAndGlyphs">Search</text>
<rect x="894" y="1044" width="23" height="21" rx="2" fill="#2b2b2b"/><rect x="902" y="1036" width="22" height="21" rx="2" fill="#ddd" fill-opacity=".8"/>
<path d="M949 1037h10l3 4h18v24h-31z" fill="#f6b91e"/><rect x="949" y="1044" width="31" height="21" fill="#fcd34d"/><rect x="954" y="1059" width="21" height="6" fill="#0d7fd6"/><circle cx="964" cy="1072" r="2" fill="#888"/>
<g transform="translate(-8 0)"><circle cx="1030" cy="1041" r="4" fill="#7b83eb"/><rect x="1024" y="1046" width="13" height="16" rx="6" fill="#7b83eb"/><circle cx="1023" cy="1040" r="5" fill="#5059c9"/><rect x="1013" y="1045" width="18" height="18" rx="2" fill="#4b53bc"/><text x="1017" y="1059" font-size="13" font-weight="bold" fill="#fff">T</text></g>
<circle cx="1074" cy="1050" r="15" fill="#1273c9"/><path d="M1059 1048a15 15 0 0 1 30 1q0 6-8 6-5 0-4-3 1-3 0-5-3-5-9-5-6 1-9 6z" fill="#35c79a"/><path d="M1060 1054q3 9 13 11 8 1 13-4-7 2-13-1-5-3-5-9-4 0-8 3z" fill="#2ea2e0"/><ellipse cx="1072" cy="1054" rx="5" ry="6" fill="#0b4a9c"/><circle cx="1074" cy="1072" r="2.500" fill="#777"/>
<path d="M1115 1040h28q2 0 2 2v22q0 1-2 1h-28q-2 0-2-1v-22q0-2 2-2z" fill="#104f8f"/><path d="M1123 1040v-4a6 6 0 0 1 12 0v4" fill="none" stroke="#25a5e8" stroke-width="2"/><rect x="1122" y="1045" width="6.500" height="6.500" fill="#f25022"/><rect x="1130" y="1045" width="6.500" height="6.500" fill="#7fba00"/><rect x="1122" y="1053" width="6.500" height="6.500" fill="#00a4ef"/><rect x="1130" y="1053" width="6.500" height="6.500" fill="#ffb900"/>
<rect x="1160" y="1026" width="48" height="48" rx="3" fill="#f9f3e8"/>
<circle cx="1184" cy="1050" r="15" fill="#ea4335"/><path d="M1184 1050l13-7.500a15 15 0 0 1-13 22.500l-7-13z" fill="#fbbc04"/><path d="M1169 1050a15 15 0 0 0 15 15l7-13-7-2-12-8z" fill="#34a853"/><circle cx="1184" cy="1050" r="7" fill="#4285f4" stroke="#fff" stroke-width="2"/>
<ellipse cx="1195" cy="1037" rx="10" ry="11" fill="#6c5138"/><ellipse cx="1195" cy="1038" rx="5.500" ry="8" fill="#c49a74"/>
<rect x="1174" y="1070" width="20" height="4" rx="2" fill="#0a7ee0"/>
<rect x="1214" y="1025" width="50" height="50" rx="3" fill="#e9b1ac"/>
<circle cx="1239" cy="1051" r="14" fill="#2ba3e0"/><path d="M1231 1050l15-6-2 14-5-3-3 3v-5z" fill="#fff"/>
<rect x="1241" y="1035" width="20" height="15" rx="5" fill="#f44336"/><text x="1243" y="1047" font-size="11" fill="#fff" textLength="16" lengthAdjust="spacingAndGlyphs">819</text>
<rect x="1236" y="1070" width="7" height="4" rx="2" fill="#c62828"/>
<circle cx="1294" cy="1050" r="15" fill="#ed6c47"/><path d="M1294 1035a15 15 0 0 1 15 15h-15z" fill="#ff8f6b"/><path d="M1294 1050h15a15 15 0 0 1-15 15z" fill="#d35230"/><rect x="1279" y="1040" width="16" height="20" rx="1.500" fill="#c43e1c"/><text x="1282" y="1056" font-size="13" font-weight="bold" fill="#fff">P</text><circle cx="1294" cy="1072" r="2.500" fill="#777"/>
<rect x="1339" y="1036" width="25" height="30" rx="1.500" fill="#2b7cd3"/><rect x="1351" y="1036" width="13" height="10" fill="#41a5ee"/><rect x="1339" y="1056" width="25" height="10" fill="#185abd"/><rect x="1334" y="1042" width="16" height="17" rx="1.500" fill="#185abd"/><text x="1336" y="1055" font-size="12" font-weight="bold" fill="#fff">W</text><circle cx="1349" cy="1072" r="2.500" fill="#777"/>
<path d="M1547 1053l6-6 6 6" fill="none" stroke="#222" stroke-width="1.800"/>
<path d="M1586 1055q-4-1-4-5 0-4 5-4 1-5 6-5 5 0 7 5 3 1 3 5t-4 4z" fill="#bbb" stroke="#222" stroke-width="1.400"/><path d="M1584 1042l18 18" stroke="#222" stroke-width="1.400"/>
<rect x="1630.500" y="1040" width="7" height="14" rx="3.500" fill="none" stroke="#1a62b8" stroke-width="1.600"/><path d="M1627 1049a7 7 0 0 0 14 0M1634 1056v6" fill="none" stroke="#1a62b8" stroke-width="1.600"/>
<text x="1668" y="1056" font-size="15" fill="#222" textLength="26" lengthAdjust="spacingAndGlyphs">УКР</text>
<path d="M1727 1041v6l-9 4v2l9-2v5l-3 2v2l4-1 4 1v-2l-3-2v-5l9 2v-2l-9-4v-6z" transform="translate(-1 0)" fill="none" stroke="#222" stroke-width="1.200"/>
<path d="M1749 1047h4l4-4v14l-4-4h-4z" fill="none" stroke="#222" stroke-width="1.300"/><path d="M1760 1046q2 4 0 8M1763 1044q3 6 0 12" fill="none" stroke="#222" stroke-width="1.200"/>
<rect x="1779" y="1044" width="17" height="12" rx="1.500" fill="#333" stroke="#222"/><rect x="1796" y="1047" width="2" height="6" fill="#222"/><path d="M1784 1042l-2 5h3l-2 4" fill="none" stroke="#222"/>
<text x="1860" y="1046" font-size="15.500" fill="#222" textLength="36" lengthAdjust="spacingAndGlyphs">14:19</text>
<text x="1818" y="1066" font-size="15.500" fill="#222" textLength="78" lengthAdjust="spacingAndGlyphs">25/04/2025</text>
</svg>
</body></html>
